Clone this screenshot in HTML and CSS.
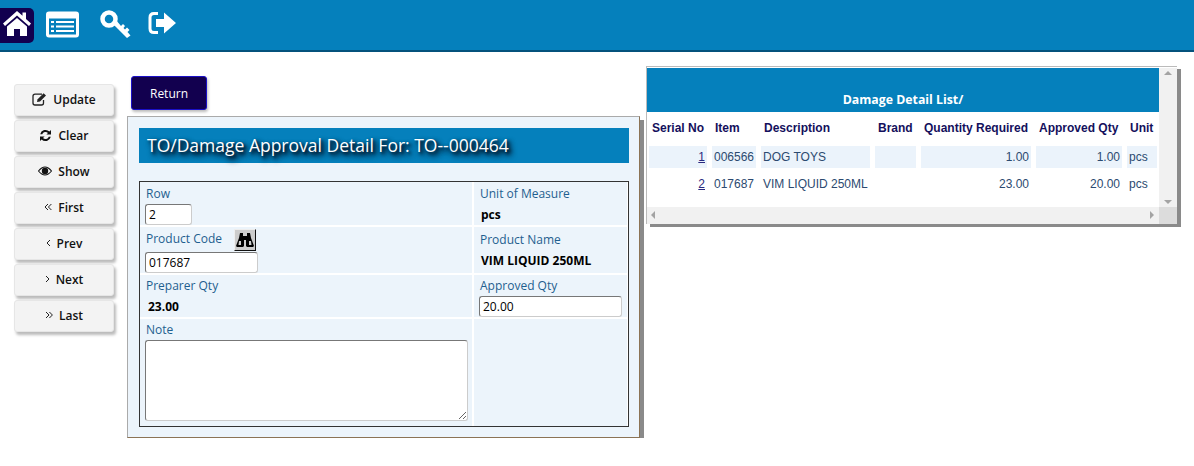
FILE: index.html
```html
<!DOCTYPE html>
<html>
<head>
  <title>TO/Damage Approval Detail</title>
  <link rel="stylesheet" href="styles.css">
</head>
<body>

  <div class="topbar">
    <a class="nav-icon active">
      <svg width="30" height="28" viewBox="0 0 30 28"><path d="M15 2 L1 14.500 L3 17 L15 6.500 L27 17 L29 14.500 L24 10 V3.500 H20.500 V6.800 Z" fill="#fff"/><path d="M5 17.500 L15 9 L25 17.500 V27 H18 V20 H12 V27 H5 Z" fill="#fff"/></svg>
    </a>
    <a class="nav-icon">
      <svg width="34" height="27" viewBox="0 0 34 27"><rect width="33" height="26" y="0.500" rx="3" fill="#fff"/><path d="M3 7.500H30V23.500H3Z" fill="#0580bc"/><path d="M5 10h3v2H5zM10 10h18v2H10zM5 14.500h3v2H5zM10 14.500h18v2H10zM5 19h3v2H5zM10 19h18v2H10z" fill="#fff"/></svg>
    </a>
    <a class="nav-icon key">
      <svg width="32" height="30" viewBox="0 0 32 30"><circle cx="9" cy="9" r="6.500" fill="none" stroke="#fff" stroke-width="4.500"/><path d="M12.500 13.500 L27 28 L30.500 25.500 L27.500 22 L29.500 20 L27 17.500 L25 19.500 L23.500 18 L25 16 L23 14 L21 16 L16 10 Z" fill="#fff"/></svg>
    </a>
    <a class="nav-icon exit">
      <svg width="29" height="22" viewBox="0 0 29 22"><path d="M10 1.500H6Q2 1.500 2 5.500V16.500Q2 20.500 6 20.500H10" fill="none" stroke="#fff" stroke-width="3"/><path d="M8 7H16V0.500L28 11 16 21.500V15H8Z" fill="#fff"/></svg>
    </a>
  </div>

  <div class="main">
    <div class="actions">
      <button class="action-btn">
        <svg width="15" height="14" viewBox="0 0 15 14"><path d="M10 2.200H3Q1 2.200 1 4.200V11Q1 13 3 13H9.500Q11.500 13 11.500 11V8" fill="none" stroke="#222" stroke-width="1.300"/><path d="M5 10 L5.600 7.300 L11.600 1.300 L14 3.600 L8 9.500 Z" fill="#222"/></svg>
        Update
      </button>
      <button class="action-btn">
        <svg width="13" height="13" viewBox="0 0 13 13"><path d="M1.200 5.200 A5.400 5.400 0 0 1 10.400 2.600 L12 1V5.600H7.400L9 4A3.500 3.500 0 0 0 3.200 5.200Z" fill="#111"/><path d="M11.800 7.800 A5.400 5.400 0 0 1 2.600 10.400 L1 12V7.400H5.600L4 9A3.500 3.500 0 0 0 9.800 7.800Z" fill="#111"/></svg>
        Clear
      </button>
      <button class="action-btn">
        <svg width="14" height="10" viewBox="0 0 14 10"><path d="M0.500 5 Q7 -3 13.500 5 Q7 13 0.500 5Z" fill="none" stroke="#111" stroke-width="1.100"/><circle cx="7" cy="5" r="3.200" fill="#111"/></svg>
        Show
      </button>
      <button class="action-btn">
        <svg width="8" height="8" viewBox="0 0 8 8"><path d="M4 1 1 4 4 7M7.400 1 4.400 4 7.400 7" fill="none" stroke="#222" stroke-width="1"/></svg>
        First
      </button>
      <button class="action-btn">
        <svg width="5" height="8" viewBox="0 0 5 8"><path d="M4 1 1 4 4 7" fill="none" stroke="#222" stroke-width="1"/></svg>
        Prev
      </button>
      <button class="action-btn">
        <svg width="5" height="8" viewBox="0 0 5 8"><path d="M1 1 4 4 1 7" fill="none" stroke="#222" stroke-width="1"/></svg>
        Next
      </button>
      <button class="action-btn">
        <svg width="8" height="8" viewBox="0 0 8 8"><path d="M1 1 4 4 1 7M4.400 1 7.400 4 4.400 7" fill="none" stroke="#222" stroke-width="1"/></svg>
        Last
      </button>
    </div>

    <div class="detail-col">
      <button class="return-btn">Return</button>
      <div class="detail-panel">
        <h2 class="detail-title">TO/Damage Approval Detail For: TO--000464</h2>
        <div class="detail-grid">
          <div class="cell">
            <label>Row</label>
            <input class="input-row" type="text" value="2">
          </div>
          <div class="cell">
            <label>Unit of Measure</label>
            <div class="value">pcs</div>
          </div>
          <div class="cell code-cell">
            <div class="code-label">
              <label>Product Code</label>
              <span class="find-btn">
                <svg width="18" height="16" viewBox="0 0 18 16"><path d="M4 1h3v3h4V1h3l1 5 3 8-1 1h-6l-1-1V8H8v6l-1 1H1l-1-1 3-8Z" fill="#000"/><path d="M3 9h2v4H2.500ZM13 9h2l.5 4H13Z" fill="#ccc"/></svg>
              </span>
            </div>
            <input class="input-code" type="text" value="017687">
          </div>
          <div class="cell name-cell">
            <label>Product Name</label>
            <div class="value">VIM LIQUID 250ML</div>
          </div>
          <div class="cell tight">
            <label>Preparer Qty</label>
            <div class="value qty">23.00</div>
          </div>
          <div class="cell tight">
            <label>Approved Qty</label>
            <input class="input-wide" type="text" value="20.00">
          </div>
          <div class="cell tight">
            <label>Note</label>
            <textarea class="note"></textarea>
          </div>
          <div class="cell"></div>
        </div>
      </div>
    </div>

    <div class="list-panel">
      <div class="list-body">
        <div class="list-content">
          <div class="list-title">Damage Detail List/</div>
          <table class="list-table">
            <colgroup>
              <col class="col-serial"><col class="col-item"><col class="col-desc"><col class="col-brand">
              <col class="col-qty"><col class="col-appr"><col class="col-unit">
            </colgroup>
            <tr>
              <th>Serial No</th><th>Item</th><th>Description</th><th>Brand</th>
              <th>Quantity Required</th><th>Approved Qty</th><th>Unit</th>
            </tr>
            <tr class="odd">
              <td class="num"><a href="#">1</a></td><td>006566</td><td>DOG TOYS</td><td></td>
              <td class="num">1.00</td><td class="num">1.00</td><td>pcs</td>
            </tr>
            <tr>
              <td class="num"><a href="#">2</a></td><td>017687</td><td>VIM LIQUID 250ML</td><td></td>
              <td class="num">23.00</td><td class="num">20.00</td><td>pcs</td>
            </tr>
          </table>
        </div>
        <div class="vbar">
          <span class="arrow up"></span>
          <span class="arrow down"></span>
        </div>
      </div>
      <div class="hbar">
        <span class="arrow left"></span>
        <span class="arrow right"></span>
        <span class="corner"></span>
      </div>
    </div>
  </div>

</body>
</html>
```

FILE: styles.css
```css
body {
  margin: 0;
  background: #fff;
  font-family: "Open Sans", "Noto Sans", sans-serif;
  font-size: 12px;
  color: #000;
}

.topbar {
  display: flex;
  align-items: center;
  height: 50px;
  background: #0580bc;
  border-bottom: 2px solid #04527c;
}

.nav-icon {
  display: flex;
  align-items: center;
  justify-content: center;
  height: 34px;
  margin-bottom: 2px;
}

.nav-icon.active {
  align-self: flex-start;
  box-sizing: border-box;
  width: 34px;
  height: 35px;
  padding-bottom: 6px;
  margin: 8px 12px 0 0;
  background: #12004f;
  border-radius: 0 5px 5px 0;
}

.nav-icon.key {
  margin: 0 16px 0 20px;
}

.nav-icon.exit {
  margin-bottom: 4px;
}

.main {
  display: flex;
  align-items: flex-start;
}

.actions {
  display: flex;
  flex-direction: column;
  gap: 4px;
  width: 100px;
  margin: 32px 13px 0 14px;
}

.action-btn {
  display: flex;
  align-items: center;
  justify-content: center;
  gap: 6px;
  height: 32px;
  padding: 0 0 2px;
  background: #f3f3f3;
  border: 1px solid #e6e6e6;
  border-radius: 3px;
  box-shadow: 2px 3px 3px #bbb;
  font-family: inherit;
  font-size: 12px;
  font-weight: 600;
  color: #111;
}

.detail-col {
  width: 513px;
}

.return-btn {
  display: block;
  width: 76px;
  height: 34px;
  margin: 24px 0 6px 4px;
  background: #12004f;
  border: 1px solid #1a10c8;
  border-radius: 3px;
  box-shadow: 1px 2px 3px #bbb;
  color: #fff;
  font-family: inherit;
  font-size: 12px;
}

.detail-panel {
  height: 322px;
  box-sizing: border-box;
  padding: 11px 10px 0 11px;
  background: #ecf4fb;
  border: 1px solid #aaa;
  border-right-color: #8b7355;
  border-bottom-color: #8b7355;
  box-shadow: 4px 4px 0 #8a8a8a;
}

.detail-title {
  height: 35px;
  margin: 0 0 18px;
  padding-left: 8px;
  background: #0580bc;
  color: #fff;
  font-size: 17.5px;
  font-weight: 400;
  line-height: 34px;
  text-shadow: 2px 2px 3px #011c33, 3px 3px 5px #011c33, 3px 4px 6px #011c33;
}

.detail-grid {
  display: grid;
  grid-template-columns: 332px 153px;
  grid-template-rows: 43px 46px 42px 107px;
  gap: 2px;
  width: 490px;
  box-sizing: border-box;
  border: 1px solid #333;
  background: #fff;
}

.cell {
  background: #ecf4fb;
  padding: 3px 5px 0;
  min-width: 0;
}

.cell.code-cell {
  padding-top: 1px;
}

.cell.name-cell {
  padding-top: 4px;
}

.cell.tight {
  padding-top: 2px;
}

.cell label {
  display: block;
  margin-left: 1px;
  color: #1f5f8f;
  line-height: 17px;
}

.value {
  margin: 4px 0 0 2px;
  font-weight: 700;
  line-height: 17px;
}

.value.qty {
  margin-left: 3px;
}

.code-label {
  display: flex;
  align-items: center;
  gap: 12px;
  height: 23px;
  margin-bottom: 1px;
}

.code-label label {
  margin-top: -2px;
}

.find-btn {
  display: flex;
  align-items: center;
  justify-content: center;
  width: 22px;
  height: 22px;
  box-sizing: border-box;
  background: #ccc;
  border: 1px solid;
  border-color: #eee #111 #111 #eee;
}

input, textarea {
  display: block;
  box-sizing: border-box;
  margin: 0;
  padding: 0 3px;
  background: #fff;
  border: 1px solid;
  border-color: #777 #ccc #ccc #777;
  border-radius: 3px;
  font-family: inherit;
  font-size: 12px;
  color: #000;
}

.input-row {
  width: 47px;
  height: 21px;
  margin-top: 2px;
}

.input-code {
  width: 113px;
  height: 21px;
}

.input-wide {
  width: 143px;
  height: 21px;
  margin-top: 2px;
}

.note {
  width: 323px;
  height: 81px;
  margin-top: 2px;
}

.list-panel {
  width: 531px;
  height: 158px;
  box-sizing: border-box;
  margin: 14px 0 0 6px;
  padding-top: 1px;
  border: 1px solid #bbb;
  border-width: 1px 0 0 1px;
  box-shadow: 4px 3px 0 #8a8a8a;
  background: #fff;
}

.list-body {
  display: flex;
  height: 139px;
}

.list-content {
  flex: 1;
  min-width: 0;
}

.list-title {
  height: 44px;
  background: #0580bc;
  color: #fff;
  font-weight: 700;
  font-size: 12.3px;
  line-height: 63px;
  text-align: center;
  overflow: hidden;
}

.list-table {
  table-layout: fixed;
  width: 518px;
  border-collapse: separate;
  border-spacing: 5px 0;
  margin: 0 0 0 -3px;
  font-family: "Liberation Sans", sans-serif;
  font-size: 12px;
}

.col-serial { width: 58px; }
.col-item { width: 44px; }
.col-desc { width: 109px; }
.col-brand { width: 41px; }
.col-qty { width: 110px; }
.col-appr { width: 86px; }
.col-unit { width: 30px; }

.list-table th {
  height: 32px;
  padding: 0 0 2px 3px;
  color: #14105c;
  font-weight: 700;
  text-align: left;
  white-space: nowrap;
}

.list-table td {
  height: 22px;
  padding: 0 2px;
  color: #2c4a70;
  white-space: nowrap;
}

.list-table tr + tr + tr td {
  height: 32px;
}

.list-table .odd td {
  background: #ebf3fb;
}

.list-table .num {
  text-align: right;
}

.list-table a {
  color: #2a2a80;
}

.vbar {
  position: relative;
  width: 18px;
  background: #f1f1f1;
}

.hbar {
  position: relative;
  height: 17px;
  background: #f1f1f1;
}

.corner {
  position: absolute;
  right: 0;
  top: 0;
  width: 18px;
  height: 17px;
  background: #dcdcdc;
}

.arrow {
  position: absolute;
  width: 0;
  height: 0;
  border: 4px solid transparent;
}

.arrow.up {
  top: 3px;
  left: 5px;
  border-top-width: 0;
  border-bottom-color: #a3a3a3;
}

.arrow.down {
  bottom: 3px;
  left: 5px;
  border-bottom-width: 0;
  border-top-color: #a3a3a3;
}

.arrow.left {
  left: 4px;
  top: 4px;
  border-left-width: 0;
  border-right-color: #a3a3a3;
}

.arrow.right {
  right: 23px;
  top: 4px;
  border-right-width: 0;
  border-left-color: #a3a3a3;
}
```
